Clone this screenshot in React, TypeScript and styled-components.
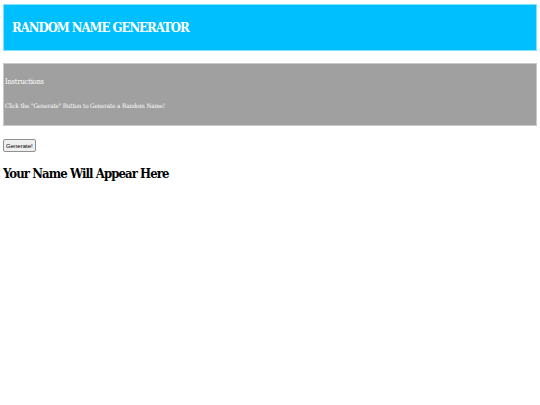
import React, { useState } from 'react';
import styled, { createGlobalStyle } from 'styled-components';

const names = ['Alice Walker', 'Marcus Reed', 'Nora Fielding', 'Oscar Bennett', 'Priya Shah'];

const GlobalStyle = createGlobalStyle`
  body {
    margin: 4px 3px;
    background: #ffffff;
    font-family: "DejaVu Serif Condensed", "DejaVu Serif", serif;
  }
`;

const Header = styled.header`
  background: #00bfff;
  border: 1px solid #7fe3ff;
  height: 45px;
  display: flex;
  align-items: center;
  padding: 0 8px;
`;

const Title = styled.h1`
  margin: 0;
  color: #ffffff;
  font-size: 13px;
  font-weight: 600;
  letter-spacing: -1px;
`;

const Instructions = styled.section`
  margin-top: 12px;
  background: #a0a0a0;
  border: 1px solid #c8c8c8;
  height: 61px;
  color: #ffffff;
  display: flex;
  flex-direction: column;
  padding: 0 1px;
`;

const InstructionsTitle = styled.h3`
  margin: 13px 0 0;
  font-size: 7.5px;
  font-weight: normal;
  letter-spacing: -0.2px;
`;

const InstructionsText = styled.p`
  margin: 16px 0 0;
  font-size: 6.2px;
  letter-spacing: -0.1px;
`;

const GenerateButton = styled.button`
  margin-top: 13px;
  font-family: "Liberation Sans", Arial, sans-serif;
  font-size: 6px;
  padding: 2px;
  height: 13px;
  border: 1px solid #8f8f8f;
  border-radius: 2px;
  background: #efefef;
  color: #000;
`;

const NameHeading = styled.h2`
  margin: 14px 0 0;
  font-size: 13px;
  font-weight: bold;
  letter-spacing: -0.9px;
  color: #000;
`;

export default function App() {
  const [name, setName] = useState('');

  return (
    <>
      <GlobalStyle />
      <Header>
        <Title>RANDOM NAME GENERATOR</Title>
      </Header>
      <Instructions>
        <InstructionsTitle>Instructions</InstructionsTitle>
        <InstructionsText>Click the "Generate" Button to Generate a Random Name!</InstructionsText>
      </Instructions>
      <GenerateButton onClick={() => setName(names[Math.floor(Math.random() * names.length)])}>
        Generate!
      </GenerateButton>
      <NameHeading>{name || 'Your Name Will Appear Here'}</NameHeading>
    </>
  );
}
